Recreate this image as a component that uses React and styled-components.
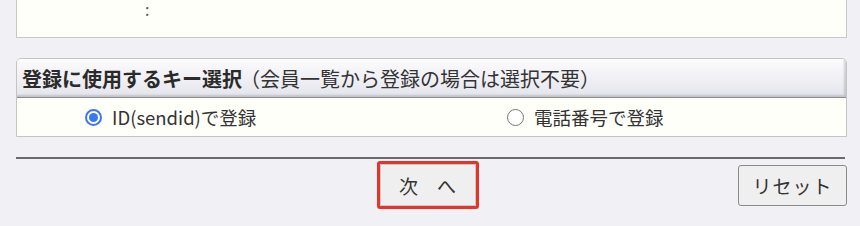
import React from 'react';
import styled, { createGlobalStyle } from 'styled-components';

const GlobalStyle = createGlobalStyle`
  html, body {
    margin: 0;
    padding: 0;
    background: #f0f0f5;
  }
  body {
    font-family: "Noto Sans CJK JP", "Noto Sans", sans-serif;
    color: #333;
  }
`;

const Page = styled.div`
  padding: 0 13px 0 16px;
  width: 860px;
  box-sizing: border-box;
`;

const InfoBox = styled.div`
  height: 38px;
  box-sizing: border-box;
  background: #fffffa;
  border: 1px solid #c8c8c8;
  border-top: none;
  padding-left: 128px;
  padding-top: 1px;
`;

const Dots = styled.div`
  font-size: 16px;
  line-height: 16px;
  color: #555;
`;

const Panel = styled.div`
  margin-top: 20px;
  border: 1px solid #c4c4c4;
  border-radius: 5px 5px 0 0;
  background: #fffffa;
`;

const PanelHeader = styled.div`
  height: 39px;
  box-sizing: border-box;
  display: flex;
  align-items: center;
  padding-left: 5px;
  font-size: 20px;
  border-radius: 4px 4px 0 0;
  background: linear-gradient(#fcfcfe, #e4e4ec);
  border-bottom: 1px solid #8c8c8c;
  box-shadow: inset -2px -2px 2px rgba(0, 0, 0, 0.15);
`;

const Strong = styled.span`
  font-weight: 700;
  color: #2a2a2a;
`;

const Note = styled.span`
  font-weight: 400;
  color: #333;
  margin-left: -2px;
`;

const OptionRow = styled.div`
  height: 38px;
  display: grid;
  grid-template-columns: 416px 1fr;
  align-items: center;
`;

const Option = styled.label`
  display: flex;
  align-items: center;
  gap: 10px;
  padding-left: ${p => p.$indent}px;
  font-size: 18.5px;
  color: #333;
`;

const Radio = styled.span`
  flex: none;
  width: 17px;
  height: 17px;
  box-sizing: border-box;
  border-radius: 50%;
  border: ${p => (p.$checked ? '2px solid #3b78f2' : '1px solid #777')};
  background: #fff;
  display: flex;
  align-items: center;
  justify-content: center;
  &::after {
    content: '';
    display: ${p => (p.$checked ? 'block' : 'none')};
    width: 9px;
    height: 9px;
    border-radius: 50%;
    background: #3b78f2;
  }
`;

const Divider = styled.div`
  margin-top: 20px;
  border-top: 2px solid #6b6b6b;
  margin-right: 2px;
`;

const ButtonRow = styled.div`
  display: grid;
  grid-template-columns: 1fr auto 1fr;
  align-items: center;
  margin-top: 2px;
`;

const Button = styled.button`
  font-family: "Noto Sans CJK JP", sans-serif;
  font-size: 19px;
  color: #333;
  background: #efefef;
  height: ${p => (p.$highlight ? '48px' : '41px')};
  width: ${p => (p.$highlight ? '102px' : '109px')};
  border: ${p => (p.$highlight ? '3px solid #e5352b' : '1px solid #8a8a8a')};
  border-radius: 3px;
  padding: 0;
  letter-spacing: ${p => (p.$highlight ? '0' : '1px')};
  justify-self: ${p => p.$align || 'center'};
  margin-right: ${p => (p.$highlight ? '8px' : '0')};
  box-shadow: ${p => (p.$highlight ? 'inset 0 0 0 1px #c9c9c9' : 'none')};
`;

export default function App() {
  return (
    <>
      <GlobalStyle />
      <Page>
        <InfoBox>
          <Dots>:</Dots>
        </InfoBox>
        <Panel>
          <PanelHeader>
            <Strong>登録に使用するキー選択</Strong>
            <Note>（会員一覧から登録の場合は選択不要）</Note>
          </PanelHeader>
          <OptionRow>
            <Option $indent={68}>
              <Radio $checked />
              ID(sendid)で登録
            </Option>
            <Option $indent={74}>
              <Radio />
              電話番号で登録
            </Option>
          </OptionRow>
        </Panel>
        <Divider />
        <ButtonRow>
          <span />
          <Button $highlight>次　へ</Button>
          <Button $align="end">リセット</Button>
        </ButtonRow>
      </Page>
    </>
  );
}
